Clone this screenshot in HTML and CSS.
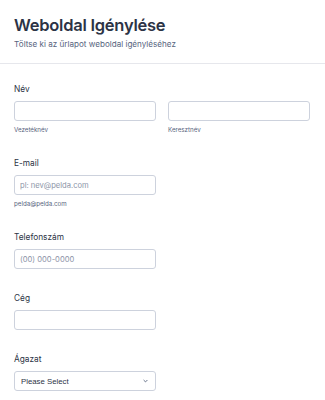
FILE: index.html
```html
<!DOCTYPE html>
<html lang="hu">
<head>
  <meta charset="UTF-8">
  <title>Weboldal Igénylése</title>
  <meta name="viewport" content="width=device-width, initial-scale=1.0">
  <link rel="stylesheet" href="styles.css">
</head>
<body>
  <div class="header">
    <h1>Weboldal Igénylése</h1>
    <p class="subtitle">Töltse ki az űrlapot weboldal igényléséhez</p>
  </div>

  <form class="form" autocomplete="off">
    <div class="field">
      <label>Név</label>
      <div class="row">
        <div class="col">
          <input type="text">
          <span class="sub">Vezetéknév</span>
        </div>
        <div class="col">
          <input type="text">
          <span class="sub">Keresztnév</span>
        </div>
      </div>
    </div>

    <div class="field">
      <label>E-mail</label>
      <div class="col half">
        <input type="text" placeholder="pl: nev@pelda.com">
        <span class="sub">pelda@pelda.com</span>
      </div>
    </div>

    <div class="field">
      <label>Telefonszám</label>
      <div class="col half">
        <input type="text" placeholder="(00) 000-0000">
      </div>
    </div>

    <div class="field">
      <label>Cég</label>
      <div class="col half">
        <input type="text">
      </div>
    </div>

    <div class="field">
      <label>Ágazat</label>
      <div class="col half">
        <div class="select">
          <span>Please Select</span>
          <svg width="5" height="4" viewBox="0 0 5 4"><path d="M.6 1l1.9 1.9L4.4 1" fill="none" stroke="#57647e" stroke-width=".9"/></svg>
        </div>
      </div>
    </div>
  </form>
</body>
</html>
```

FILE: styles.css
```css
body{margin:0;background:#fff;font-family:Inter,"Noto Sans",sans-serif;color:#2c3345}

.header{padding:14px 15px 13px 14px;border-bottom:1px solid #e6e7ec}
.header h1{margin:0;font-size:16.5px;line-height:22px;font-weight:600;letter-spacing:-.25px}
.subtitle{margin:3px 0 0;font-size:8.1px;line-height:11px;color:#57647e}

.form{padding:19px 15px 0 14px}
.field{display:flex;flex-direction:column;padding-bottom:23px}
.field label{font-size:8.3px;line-height:12px;font-weight:400;margin-bottom:6px}

.row{display:grid;grid-template-columns:1fr 1fr;gap:12px}
.col{display:flex;flex-direction:column}
.half{width:142px}

input,.select{box-sizing:border-box;width:100%;height:20px;margin:0;padding:0 5px;
  border:1px solid #cdd2dd;border-radius:3px;background:#fff;font-family:inherit;
  font-size:7.6px;color:#2c3345}
input::placeholder{color:#8d95a8}

.sub{margin-top:4px;font-size:6.2px;line-height:9px;color:#57647e}

.select{display:flex;align-items:center;justify-content:space-between;padding:0 7px 0 6px;
  font-family:"Liberation Sans",Arial,sans-serif;font-size:7.8px}
```
